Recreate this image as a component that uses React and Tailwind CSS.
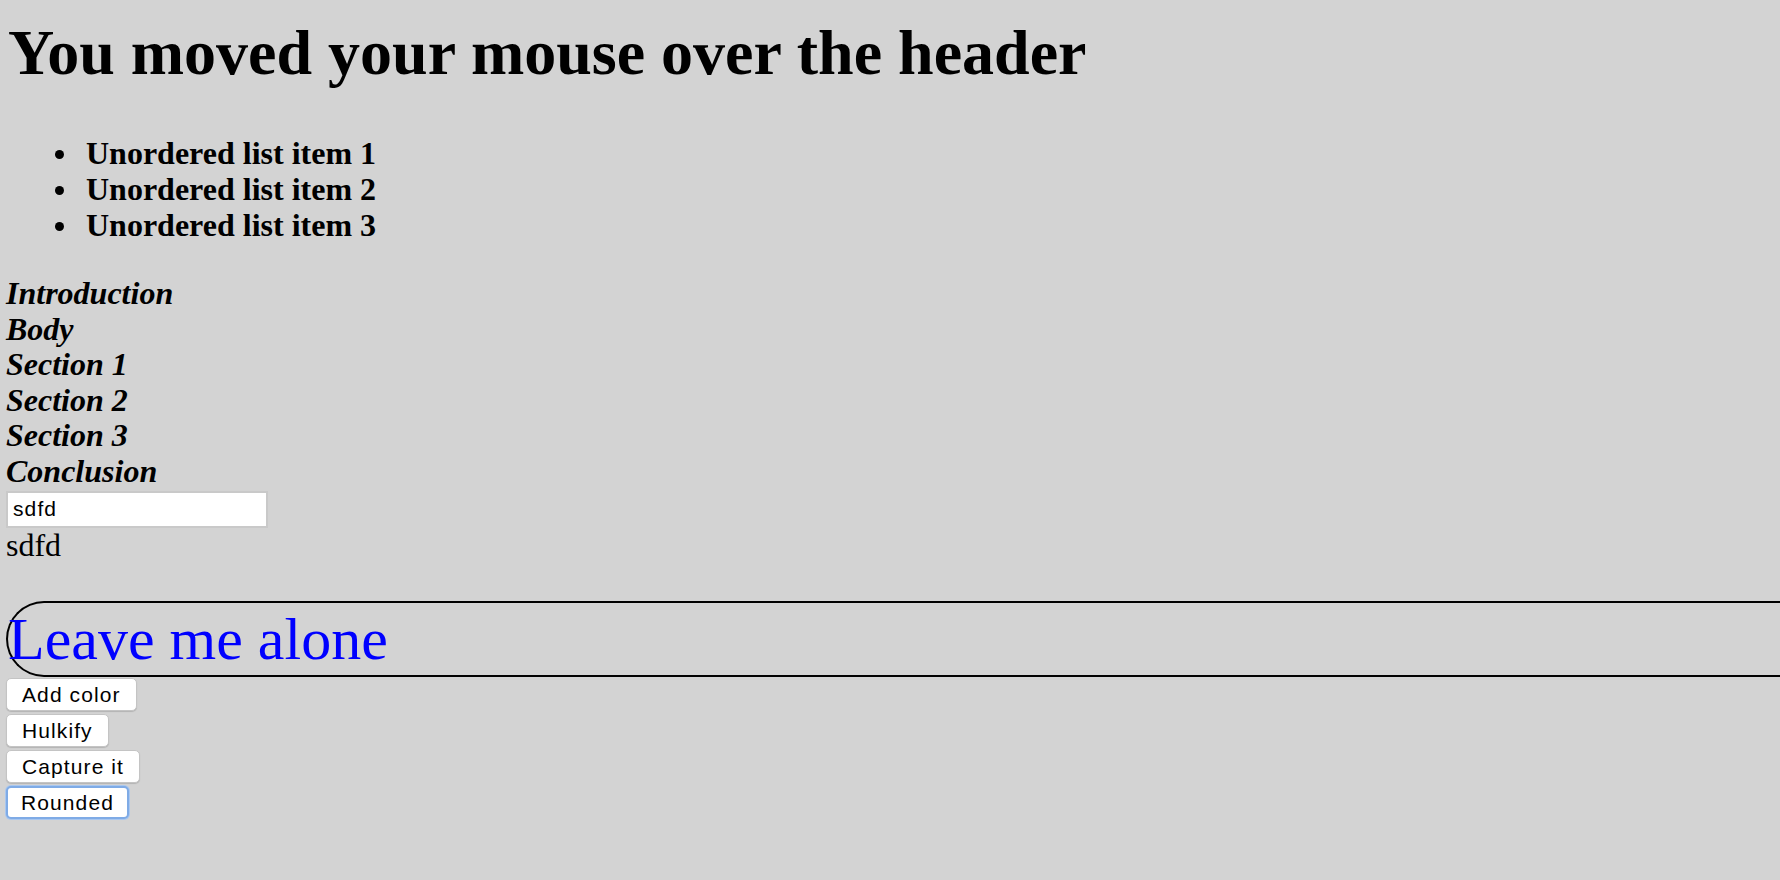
import { useState } from 'react'

const serif = "font-['Liberation_Serif',_'Times_New_Roman',_serif]"
const sans = "font-['Liberation_Sans',_Arial,_sans-serif]"

const sections = ['Introduction', 'Body', 'Section 1', 'Section 2', 'Section 3', 'Conclusion']
const buttons = ['Add color', 'Hulkify', 'Capture it', 'Rounded']

export default function App() {
  const [text, setText] = useState('sdfd')

  return (
    <div className={`min-h-screen bg-[#d3d3d3] text-black pl-[6px] pt-[17px] text-[32px] leading-[35.6px] ${serif}`}>
      <h1 className="ml-[2px] text-[64px] font-bold leading-[72px]">You moved your mouse over the header</h1>

      <ul className="mt-[46px] pl-[80px] font-bold leading-[36px]">
        {[1, 2, 3].map((n) => (
          <li key={n} className="relative">
            <span className="absolute left-[-31px] top-[15px] w-[9px] h-[9px] rounded-full bg-black" />
            Unordered list item {n}
          </li>
        ))}
      </ul>

      <div className="mt-[33px] flex flex-col items-start font-bold italic">
        {sections.map((s) => (
          <a key={s}>{s}</a>
        ))}
      </div>

      <input
        value={text}
        onChange={(e) => setText(e.target.value)}
        className={`mt-[1px] block w-[262px] h-[37px] bg-white border-2 border-[#c9c9c9] pl-[5px] text-[21px] tracking-[1.1px] outline-none ${sans}`}
      />
      <div>{text}</div>

      <div className="mt-[38px] border-2 border-r-0 border-black rounded-l-[38px] h-[76px]">
        <p className="text-[60px] leading-[72px] text-[#0000ff]">Leave me alone</p>
      </div>

      <div className="mt-[1px] flex flex-col items-start gap-[3px]">
        {buttons.map((b) => (
          <button
            key={b}
            className={`h-[33px] bg-white rounded-[5px] text-[21px] tracking-[1.1px] leading-none ${sans} ${
              b === 'Rounded'
                ? 'px-[13px] border-2 border-[#7fabe6] shadow-[0_0_0_1px_#a9c7ef]'
                : 'px-[15px] border border-[#c4c4c4] shadow-[0_1px_1px_rgba(0,0,0,0.15)]'
            }`}
          >
            {b}
          </button>
        ))}
      </div>
    </div>
  )
}
